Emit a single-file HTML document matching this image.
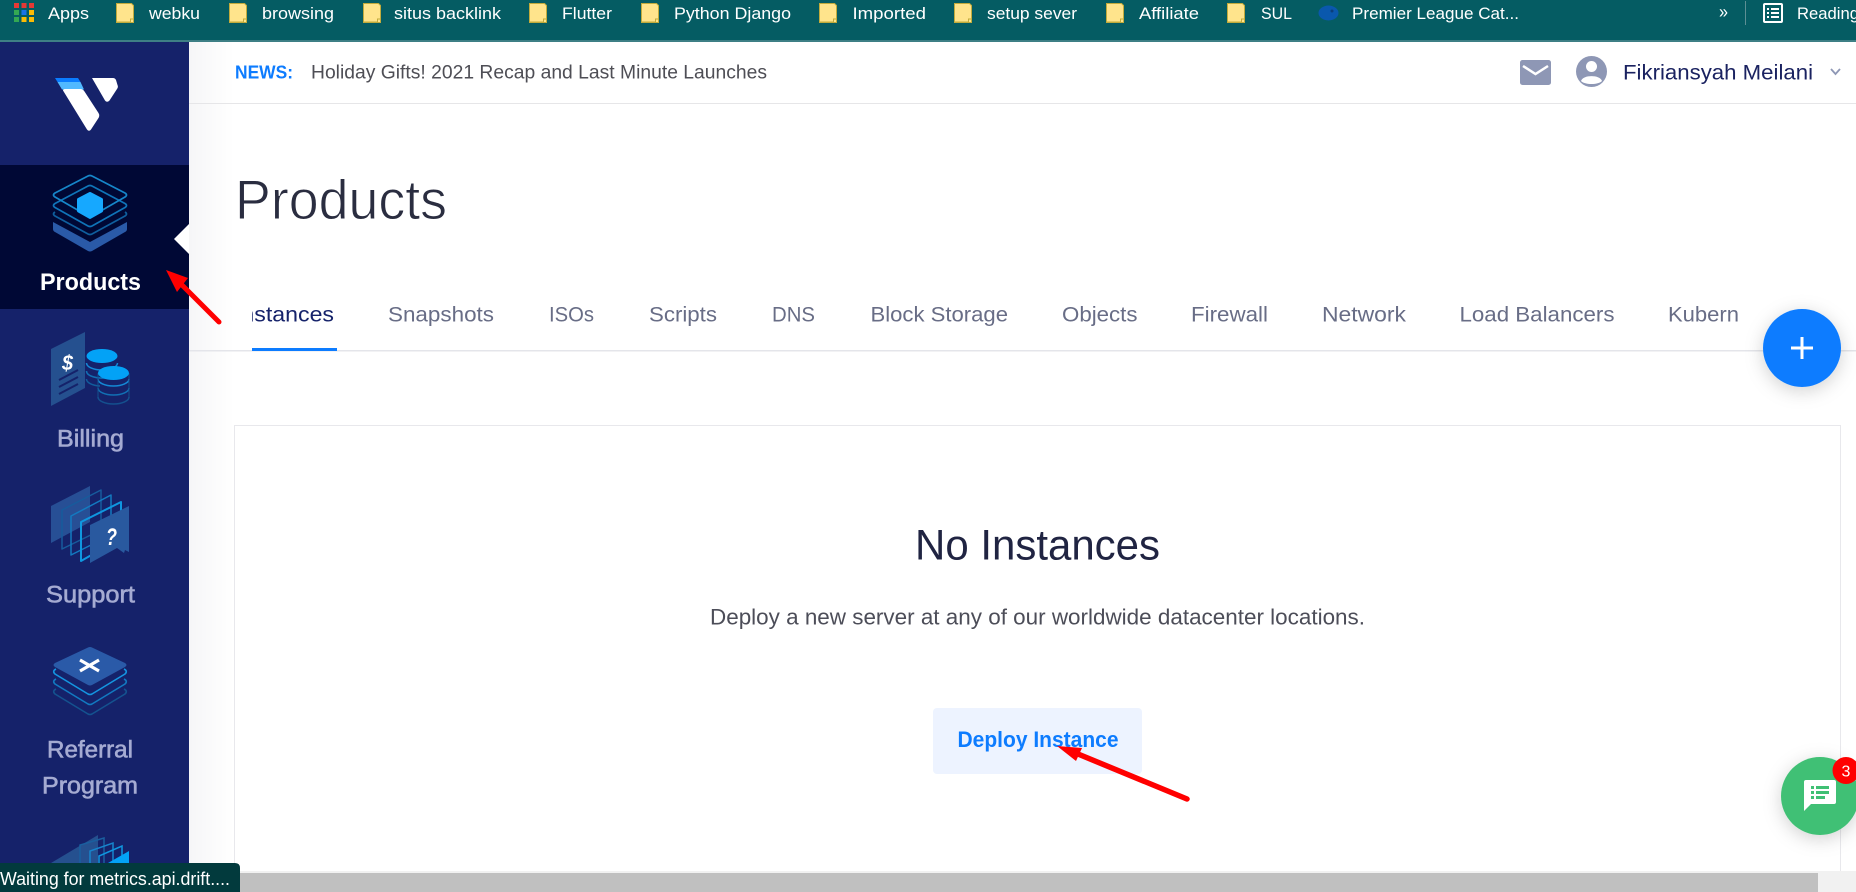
<!DOCTYPE html>
<html>
<head>
<meta charset="utf-8">
<title>Products</title>
<style>
html,body{margin:0;padding:0;width:1856px;height:892px;overflow:hidden;background:#fff}
svg{display:block;font-family:"Liberation Sans",sans-serif}
</style>
</head>
<body>
<svg width="1856" height="892" viewBox="0 0 1856 892" xmlns="http://www.w3.org/2000/svg">
<defs>
<linearGradient id="sh" x1="0" x2="1" y1="0" y2="0"><stop offset="0" stop-color="#f6f6f7"/><stop offset="1" stop-color="#ffffff"/></linearGradient>
<filter id="fs" x="-50%" y="-50%" width="200%" height="200%"><feDropShadow dx="0" dy="4" stdDeviation="9" flood-color="#000" flood-opacity="0.18"/></filter>
<clipPath id="tabclip"><rect x="252" y="290" width="1500" height="50"/></clipPath>
<g id="folder"><path d="M0.5 0.5H15.5L17.5 2.5V19.5H0.5Z" fill="#ffe48c" stroke="#c2ab3c" stroke-width="1"/><path d="M0.5 19H14.500V16H17.5" fill="none" stroke="#c2ab3c" stroke-width="1"/></g>
</defs>

<!-- page -->
<rect width="1856" height="892" fill="#fff"/>
<rect x="189" y="42" width="45" height="830" fill="url(#sh)"/>

<!-- bookmarks -->
<rect width="1856" height="40" fill="#055c63"/>
<rect y="40" width="1856" height="2" fill="#3e7f85"/>
<g>
<rect x="14" y="3" width="5" height="5" fill="#e53935"/><rect x="21.500" y="3" width="5" height="5" fill="#e53935"/><rect x="29" y="3" width="5" height="5" fill="#e53935"/>
<rect x="14" y="10" width="5" height="5" fill="#34a853"/><rect x="21.500" y="10" width="5" height="5" fill="#1a73e8"/><rect x="29" y="10" width="5" height="5" fill="#fbbc05"/>
<rect x="14" y="17" width="5" height="5" fill="#34a853"/><rect x="21.500" y="17" width="5" height="5" fill="#fbbc05"/><rect x="29" y="17" width="5" height="5" fill="#fbbc05"/>
</g>
<use href="#folder" x="116" y="3"/><use href="#folder" x="229" y="3"/><use href="#folder" x="363" y="3"/><use href="#folder" x="529" y="3"/><use href="#folder" x="641" y="3"/><use href="#folder" x="819" y="3"/><use href="#folder" x="954" y="3"/><use href="#folder" x="1106" y="3"/><use href="#folder" x="1227" y="3"/>
<ellipse cx="1328.500" cy="13" rx="10" ry="7.500" fill="#0a58ad"/><circle cx="1332" cy="11" r="1.500" fill="#0b3e7a"/>
<g fill="#fff" font-size="16.500">
<text x="48" y="19" textLength="41" lengthAdjust="spacingAndGlyphs">Apps</text>
<text x="149" y="19" textLength="51" lengthAdjust="spacingAndGlyphs">webku</text>
<text x="262" y="19" textLength="72" lengthAdjust="spacingAndGlyphs">browsing</text>
<text x="394" y="19" textLength="107" lengthAdjust="spacingAndGlyphs">situs backlink</text>
<text x="562" y="19" textLength="50" lengthAdjust="spacingAndGlyphs">Flutter</text>
<text x="674" y="19" textLength="117" lengthAdjust="spacingAndGlyphs">Python Django</text>
<text x="852.500" y="19" textLength="73.500" lengthAdjust="spacingAndGlyphs">Imported</text>
<text x="987" y="19" textLength="90" lengthAdjust="spacingAndGlyphs">setup sever</text>
<text x="1139" y="19" textLength="60" lengthAdjust="spacingAndGlyphs">Affiliate</text>
<text x="1261" y="19" textLength="31" lengthAdjust="spacingAndGlyphs">SUL</text>
<text x="1352" y="19" textLength="167" lengthAdjust="spacingAndGlyphs">Premier League Cat...</text>
<text x="1719" y="18" font-size="18" textLength="9" lengthAdjust="spacingAndGlyphs">»</text>
<text x="1797" y="19" textLength="62" lengthAdjust="spacingAndGlyphs">Reading</text>
</g>
<rect x="1745" y="1" width="1" height="24" fill="#5d8f94"/>
<g fill="none" stroke="#fff" stroke-width="2"><rect x="1764" y="4" width="18" height="18" rx="1"/></g>
<g fill="#fff"><rect x="1767" y="8" width="2" height="2"/><rect x="1771" y="8" width="8" height="2"/><rect x="1767" y="12" width="2" height="2"/><rect x="1771" y="12" width="8" height="2"/><rect x="1767" y="16" width="2" height="2"/><rect x="1771" y="16" width="8" height="2"/></g>

<!-- news bar -->
<rect x="189" y="103" width="1667" height="1" fill="#e6e6e8"/>
<text x="235" y="78.500" font-size="18.500" font-weight="700" fill="#0d7cff" textLength="58" lengthAdjust="spacingAndGlyphs">NEWS:</text>
<text x="311" y="78.500" font-size="19" fill="#4e4e55" textLength="456" lengthAdjust="spacingAndGlyphs">Holiday Gifts! 2021 Recap and Last Minute Launches</text>
<rect x="1520" y="60" width="31" height="25" rx="2.500" fill="#8e97b5"/>
<path d="M1523 66L1535.500 74L1548 66" fill="none" stroke="#fff" stroke-width="2.500"/>
<circle cx="1591.500" cy="71.500" r="15.500" fill="#8e97b5"/>
<circle cx="1591.500" cy="66.500" r="5.500" fill="#fff"/>
<path d="M1581 81C1583 74.500 1600 74.500 1602 81C1598 85 1585 85 1581 81Z" fill="#fff"/>
<text x="1623" y="79.500" font-size="21" fill="#1a2260" textLength="190" lengthAdjust="spacingAndGlyphs">Fikriansyah Meilani</text>
<path d="M1831 69L1835.500 74L1840 69" fill="none" stroke="#8e97b5" stroke-width="1.800"/>

<!-- heading -->
<text x="235" y="219" font-size="55.500" fill="#2a2d40" stroke="#ffffff" stroke-width="0.900" textLength="212" lengthAdjust="spacingAndGlyphs">Products</text>

<!-- tabs -->
<rect x="189" y="350" width="1667" height="1.500" fill="#e4e5ea"/>
<rect x="252" y="348" width="85" height="3" fill="#0d7cff"/>
<g font-size="21.500" fill="#686d86">
<text x="235" y="321.500" fill="#15226a" clip-path="url(#tabclip)" textLength="99" lengthAdjust="spacingAndGlyphs">Instances</text>
<text x="388" y="321.500" textLength="106" lengthAdjust="spacingAndGlyphs">Snapshots</text>
<text x="549" y="321.500" textLength="45" lengthAdjust="spacingAndGlyphs">ISOs</text>
<text x="649" y="321.500" textLength="68" lengthAdjust="spacingAndGlyphs">Scripts</text>
<text x="772" y="321.500" textLength="43" lengthAdjust="spacingAndGlyphs">DNS</text>
<text x="870.500" y="321.500" textLength="137.500" lengthAdjust="spacingAndGlyphs">Block Storage</text>
<text x="1062" y="321.500" textLength="75.500" lengthAdjust="spacingAndGlyphs">Objects</text>
<text x="1191" y="321.500" textLength="77" lengthAdjust="spacingAndGlyphs">Firewall</text>
<text x="1322" y="321.500" textLength="84" lengthAdjust="spacingAndGlyphs">Network</text>
<text x="1459.500" y="321.500" textLength="155" lengthAdjust="spacingAndGlyphs">Load Balancers</text>
<text x="1668" y="321.500" textLength="71" lengthAdjust="spacingAndGlyphs">Kubern</text>
</g>

<!-- card -->
<path d="M234.500 872V425.500H1840.500V872" fill="none" stroke="#e8e8ec" stroke-width="1"/>
<text x="915" y="559.500" font-size="43" fill="#202442" textLength="245" lengthAdjust="spacingAndGlyphs">No Instances</text>
<text x="710" y="624.500" font-size="22" fill="#4c4d58" textLength="655" lengthAdjust="spacingAndGlyphs">Deploy a new server at any of our worldwide datacenter locations.</text>
<rect x="933" y="708" width="209" height="66" rx="4" fill="#edf3ff"/>
<text x="957.500" y="747" font-size="22" font-weight="700" fill="#0d7cff" textLength="161" lengthAdjust="spacingAndGlyphs">Deploy Instance</text>

<!-- sidebar -->
<rect x="0" y="42" width="189" height="830" fill="#15226a"/>
<rect x="0" y="165" width="189" height="144" fill="#000835"/>
<path d="M189 224L174 239L189 254Z" fill="#fff"/>

<!-- logo -->
<path d="M55 78H78L80.500 82H57.500Z" fill="#0a7cff"/>
<path d="M57.500 82H80.500L84 89.500H62Z" fill="#51b9ff"/>
<path d="M63 90.500Q63 89 65 89H80Q83 89 84.500 91.500L98.500 113Q100 115.500 98.500 118L91 129.500Q89 132 87 129.500Z" fill="#fff"/>
<path d="M92 78H113Q115 78 116 80L117.500 85Q118.500 87 117 89L109.500 100.500Q107 103 105 100.500Z" fill="#fff"/>

<!-- products icon -->
<path d="M53 222L90 242L127 222V229Q127 231 125 232L92 251Q90 252 88 251L55 232Q53 231 53 229Z" fill="#2a5aa8"/>
<g fill="none" stroke-width="1.700" stroke-linejoin="round">
<path d="M55 212Q52 214 55 216L88 234Q90 235 92 234L125 216Q128 214 125 212" stroke="#0f5f9e"/>
<path d="M88 186Q90 185 92 186L125 203.500Q128 205.500 125 207.500L92 226Q90 227 88 226L55 207.500Q52 205.500 55 203.500Z" stroke="#0f74b8"/>
<path d="M88 176Q90 175 92 176L125 193Q128 195 125 197L92 216Q90 217 88 216L55 197Q52 195 55 193Z" stroke="#1686c9"/>
</g>
<path d="M90 193.500L101.500 199.500V211L90 217.500L78.500 211V199.500Z" fill="#16a8ff" stroke="#16a8ff" stroke-width="3" stroke-linejoin="round"/>
<text x="40" y="290" font-size="24" font-weight="700" fill="#fff" textLength="101" lengthAdjust="spacingAndGlyphs">Products</text>

<!-- billing icon -->
<path d="M51 349L85 332V388L51 406Z" fill="#25508f"/>
<text x="62" y="370" font-size="21" font-weight="700" font-style="italic" fill="#fff" textLength="11" lengthAdjust="spacingAndGlyphs">$</text>
<g stroke="#15226a" stroke-width="2"><path d="M59 380L78 370"/><path d="M59 387L78 377"/><path d="M59 394L78 384"/></g>
<g fill="none" stroke-width="1.500">
<path d="M86.500 363A15.500 7 0 0 0 117.500 363" stroke="#1489d6"/><path d="M86.500 371A15.500 7 0 0 0 108 377.500" stroke="#1170b4"/><path d="M86.500 379A15.500 7 0 0 0 100 386" stroke="#115d9c"/>
</g>
<ellipse cx="102" cy="356" rx="15.500" ry="7" fill="#03a2f6"/>
<g fill="none" stroke-width="1.500">
<path d="M98 379A15.500 7 0 0 0 129 379" stroke="#1489d6"/><path d="M98 388A15.500 7 0 0 0 129 388" stroke="#1170b4"/><path d="M98 397A15.500 7 0 0 0 129 397" stroke="#14508e"/>
<path d="M98 373V397M129 373V397" stroke="#14508e" stroke-width="1"/>
</g>
<ellipse cx="113.500" cy="373" rx="15.500" ry="7" fill="#03a2f6"/>
<text x="57" y="446.500" font-size="24" fill="#a5abd2" stroke="#a5abd2" stroke-width="0.600" textLength="67" lengthAdjust="spacingAndGlyphs">Billing</text>

<!-- support icon -->
<path d="M51 506L90 486V522L51 543Z" fill="#29549a" opacity=".9"/>
<path d="M62 510L101 490V530L62 549Z" fill="none" stroke="#175b9c" stroke-width="1.500" stroke-linejoin="round"/>
<path d="M71 516L111 495V535L71 555Z" fill="none" stroke="#137ac0" stroke-width="1.500" stroke-linejoin="round"/>
<path d="M81 522L121 502V538L81 561Z" fill="none" stroke="#0f97e0" stroke-width="2" stroke-linejoin="round"/>
<path d="M90 525L129 506V552L125 550L124 553L117 548L90 563Z" fill="#29599f"/>
<text x="106" y="545" font-size="24" font-weight="700" font-style="italic" fill="#fff" textLength="11" lengthAdjust="spacingAndGlyphs">?</text>
<text x="46" y="602.500" font-size="24" fill="#a5abd2" stroke="#a5abd2" stroke-width="0.600" textLength="89" lengthAdjust="spacingAndGlyphs">Support</text>

<!-- referral icon -->
<g fill="none" stroke-width="1.600" stroke-linejoin="round">
<path d="M56 689Q52 691 55 694L88 714Q90 715 92 714L125 694Q128 691 124 689" stroke="#14528f"/>
<path d="M56 679Q52 681 55 684L88 704Q90 705 92 704L125 684Q128 681 124 679" stroke="#1279c0"/>
<path d="M56 669Q52 671 55 674L88 694Q90 695 92 694L125 674Q128 671 124 669" stroke="#1495e0"/>
</g>
<path d="M88 647.500Q90 646.500 92 647.500L125 663Q128 665 125 667L92 685Q90 686 88 685L55 667Q52 665 55 663Z" fill="#2a5aa8"/>
<path d="M80 660L99 671M99 660L80 671" stroke="#fff" stroke-width="3.200"/>
<text x="47" y="757.500" font-size="24" fill="#a5abd2" stroke="#a5abd2" stroke-width="0.600" textLength="86" lengthAdjust="spacingAndGlyphs">Referral</text>
<text x="42" y="793.500" font-size="24" fill="#a5abd2" stroke="#a5abd2" stroke-width="0.600" textLength="96" lengthAdjust="spacingAndGlyphs">Program</text>

<!-- partial icon -->
<path d="M51 863L98 835V863Z" fill="#25508f"/>
<path d="M80 863V845L104 838V863" fill="none" stroke="#1a5f9f" stroke-width="1.500"/>
<path d="M90 863V851L113 843V863" fill="none" stroke="#1784cc" stroke-width="1.500"/>
<path d="M99 863V856L122 846V863" fill="none" stroke="#0f97e0" stroke-width="1.500"/>
<path d="M108 863L129 851V863Z" fill="#03a2f6"/>

<!-- arrows -->
<g fill="#ff0000" stroke="none">
<path d="M166 270L188 278L177 292Z"/>
<path d="M1057 746L1082 748L1076 761Z"/>
</g>
<path d="M181 284L219 322" stroke="#ff0000" stroke-width="5" stroke-linecap="round"/>
<path d="M1078 754L1187 799" stroke="#ff0000" stroke-width="5.500" stroke-linecap="round"/>

<!-- scrollbar -->
<rect x="0" y="871" width="1856" height="21" fill="#f1f1f1"/>
<rect x="0" y="873" width="1818" height="19" fill="#c0c0c0"/>

<!-- status -->
<path d="M0 863H235Q240 863 240 868V892H0Z" fill="#023a3d"/>
<text x="0" y="885" font-size="18" fill="#fff" textLength="230" lengthAdjust="spacingAndGlyphs">Waiting for metrics.api.drift....</text>

<!-- FAB -->
<circle cx="1802" cy="348" r="39" fill="#0d7cff" filter="url(#fs)"/>
<rect x="1791" y="346.500" width="22" height="3" fill="#fff"/>
<rect x="1800.500" y="337" width="3" height="22" fill="#fff"/>

<!-- chat -->
<circle cx="1820" cy="796" r="39" fill="#40c074" filter="url(#fs)"/>
<path d="M1806 780H1834Q1836 780 1836 782V802Q1836 804 1834 804H1811L1804 811V782Q1804 780 1806 780Z" fill="#fff"/>
<g fill="#40c074"><rect x="1811" y="786" width="3" height="3"/><rect x="1816" y="786" width="13" height="3"/><rect x="1811" y="791" width="3" height="3"/><rect x="1816" y="791" width="13" height="3"/><rect x="1811" y="796" width="3" height="3"/><rect x="1816" y="796" width="9" height="3"/></g>
<circle cx="1846" cy="770.500" r="13.500" fill="#ff0000"/>
<text x="1846" y="776.500" font-size="16" fill="#fff" text-anchor="middle">3</text>
</svg>
</body>
</html>
